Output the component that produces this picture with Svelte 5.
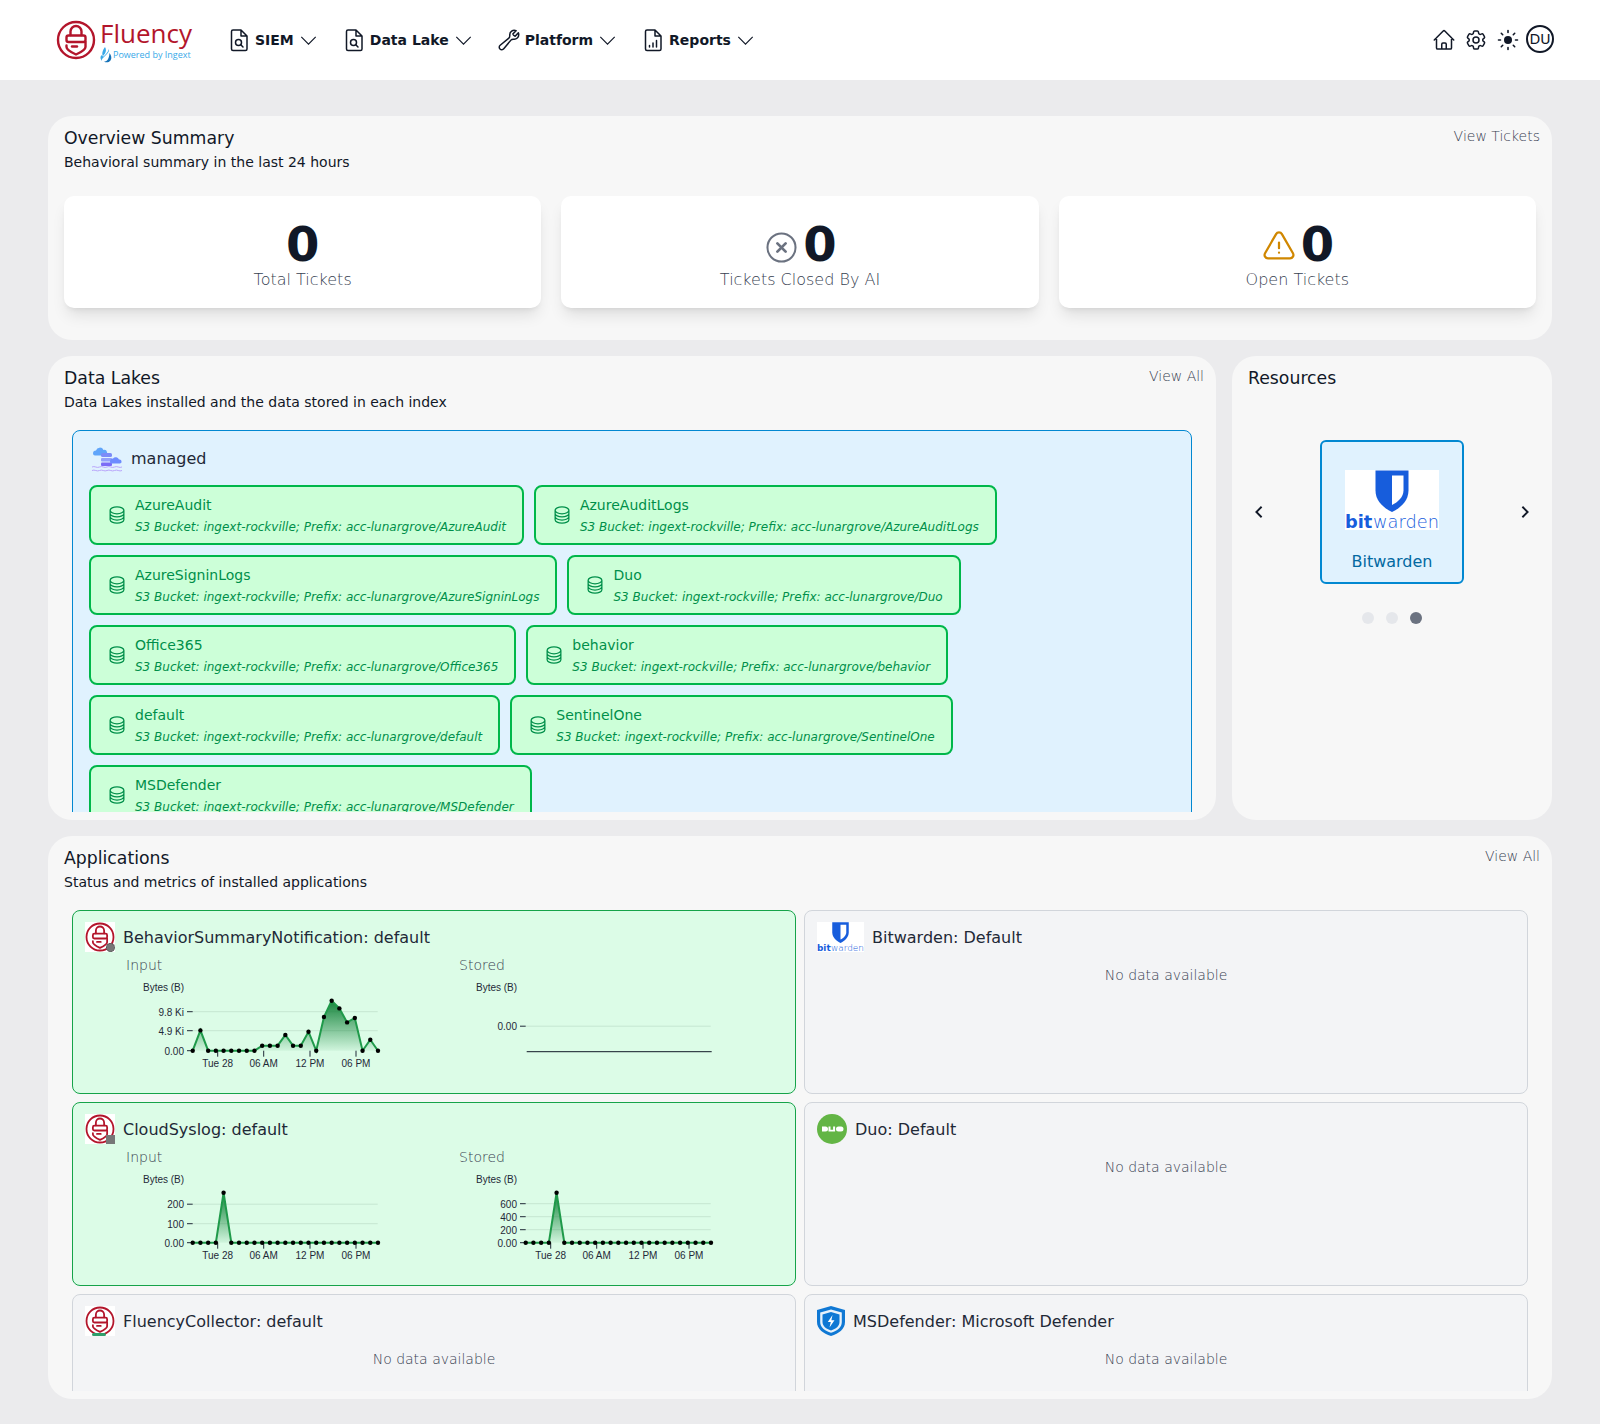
<script>
  const nav = [
    { label: 'SIEM', icon: 'search' },
    { label: 'Data Lake', icon: 'search' },
    { label: 'Platform', icon: 'wrench' },
    { label: 'Reports', icon: 'bars' }
  ];

  const lakes = ['AzureAudit', 'AzureAuditLogs', 'AzureSigninLogs', 'Duo', 'Office365', 'behavior', 'default', 'SentinelOne', 'MSDefender'];

  const zeros = (peak, v) => Array.from({ length: 25 }, (_, i) => (i === peak ? v : 0));

  // heights are pixels above the chart baseline
  const behaviorInput = [0, 20.3, 0, 0, 0, 0, 0, 0, 0, 5, 5, 5, 15.7, 5, 5, 19, 0, 33.7, 50, 42.3, 28.3, 32.7, 0, 11, 0];

  const apps = [
    {
      name: 'BehaviorSummaryNotification: default', logo: 'fluency-gear',
      input: { ticks: [['9.8 Ki', 39], ['4.9 Ki', 20], ['0.00', 0]], pts: behaviorInput },
      stored: { ticks: [['0.00', 24.5]], pts: null }
    },
    { name: 'Bitwarden: Default', logo: 'bitwarden' },
    {
      name: 'CloudSyslog: default', logo: 'fluency-box',
      input: { ticks: [['200', 38.5], ['100', 19], ['0.00', 0]], pts: zeros(4, 50) },
      stored: { ticks: [['600', 39], ['400', 26], ['200', 13], ['0.00', 0]], pts: zeros(4, 50) }
    },
    { name: 'Duo: Default', logo: 'duo' },
    { name: 'FluencyCollector: default', logo: 'fluency-collector' },
    { name: 'MSDefender: Microsoft Defender', logo: 'defender' }
  ];

  const xTicks = [['Tue 28', 91.7], ['06 AM', 137.7], ['12 PM', 184], ['06 PM', 230]];
  const X0 = 66.7;
  const Y0 = 72.7;
  const STEP = 7.72;

  const px = (i) => X0 + i * STEP;
  const line = (pts) => pts.map((v, i) => `${px(i)},${Y0 - v}`).join(' ');
  const area = (pts) => `${X0},${Y0} ${line(pts)} ${px(24)},${Y0}`;
</script>

{#snippet fluencyMark()}
  <g fill="none" stroke="#b3152b" stroke-width="2.400" stroke-linejoin="round" stroke-linecap="round">
    <circle cx="20" cy="20" r="18" />
    <path d="M14.500 15v-3.500a5.500 5.500 0 0 1 11 0V15" />
    <rect x="10.500" y="15.500" width="19" height="6.500" rx="2" />
    <path d="M29.500 22v5c0 2.500-4 5-9.500 7.500-5.500-2.500-9.500-5-9.500-7.500v-1.500" />
    <path d="M16 26.500h5" />
  </g>
{/snippet}

{#snippet bitwarden()}
  <svg class="bw" viewBox="0 0 94 60">
    <rect width="94" height="60" fill="#fff" />
    <path d="M30.500 0.500h33v20c0 11-9 18-16.500 21.500-7.500-3.500-16.500-10.500-16.500-21.500z" fill="#175ddc" />
    <path d="M47 5.500h11.500v15c0 6.500-5.500 11.500-11.500 14.500z" fill="#fff" />
    <text x="0" y="58" class="bw-bit">bit</text>
    <text x="28" y="58" class="bw-warden">warden</text>
  </svg>
{/snippet}

{#snippet appLogo(kind)}
  {#if kind === 'bitwarden'}
    <span class="logo-wide">{@render bitwarden()}</span>
  {:else if kind === 'duo'}
    <svg class="logo" viewBox="0 0 30 30">
      <circle cx="15" cy="15" r="15" fill="#63b545" />
      <path d="M5 12.500h3.500a2.500 2.500 0 0 1 0 5H5zM11.500 12.500h2v3.200h2.600v-3.200h2v5h-6.600zM21.500 12.500h2.500a2.500 2.500 0 0 1 0 5h-2.500a2.500 2.500 0 0 1 0-5z" fill="#fff" />
    </svg>
  {:else if kind === 'defender'}
    <svg class="logo-shield" viewBox="0 0 28 30">
      <path d="M14 0l14 4v12c0 7-6 11.500-14 14C6 27.500 0 23 0 16V4z" fill="#0f78d4" />
      <path d="M14 3.500l10.800 3v9.500c0 5.300-4.600 8.800-10.800 10.800C7.800 24.800 3.200 21.300 3.200 16V6.500z" fill="#e8f2fb" />
      <path d="M14 6l8.500 2.400V16c0 4-3.600 7-8.500 8.500C9.100 23 5.500 20 5.500 16V8.400z" fill="#0f78d4" />
      <path d="M15.500 9l-4.700 7h3l-1.300 5.500 5-7.200h-3.100z" fill="#fff" />
    </svg>
  {:else}
    <span class="logo-box">
      <svg class="logo" viewBox="0 0 40 40">{@render fluencyMark()}</svg>
      {#if kind === 'fluency-gear'}
        <span class="badge gear"></span>
      {:else if kind === 'fluency-box'}
        <span class="badge box"></span>
      {:else if kind === 'fluency-collector'}
        <span class="badge-note"></span>
      {/if}
    </span>
  {/if}
{/snippet}

{#snippet chart(c)}
  <svg class="chart" width="300" height="100" viewBox="0 0 300 100">
    <text x="17" y="13" class="axis">Bytes (B)</text>
    {#each c.ticks as [label, h]}
      {#if h > 0}
        <line x1={X0} x2={X0 + 185} y1={Y0 - h} y2={Y0 - h} class="grid" />
      {/if}
      <text x="58" y={Y0 - h + 4} text-anchor="end" class="axis">{label}</text>
      <line x1="61" x2={X0} y1={Y0 - h} y2={Y0 - h} stroke="#1f2937" />
    {/each}
    {#if c.pts}
      <defs>
        <linearGradient id="fade" x1="0" y1="0" x2="0" y2="1">
          <stop offset="0" stop-color="#16843c" />
          <stop offset="1" stop-color="#16843c" stop-opacity="0.06" />
        </linearGradient>
      </defs>
      <polygon points={area(c.pts)} fill="url(#fade)" />
      {#each xTicks as [label, x]}
        <line x1={x} x2={x} y1={Y0} y2={Y0 + 6} stroke="#1f2937" />
        <text x={x} y={Y0 + 16} text-anchor="middle" class="axis">{label}</text>
      {/each}
      <polyline points={line(c.pts)} fill="none" stroke="#1f9a4a" stroke-width="2" />
      {#each c.pts as v, i}
        <circle cx={px(i)} cy={Y0 - v} r="2.200" fill="#000" />
      {/each}
    {:else}
      <line x1={X0 + 1} x2={X0 + 186} y1={Y0 + 1} y2={Y0 + 1} stroke="#111827" />
    {/if}
  </svg>
{/snippet}

{#snippet chevron()}
  <svg class="chev" viewBox="0 0 24 24" fill="none" stroke="#111827" stroke-width="1.200"><path d="m19.500 8.250-7.500 7.500-7.500-7.500" /></svg>
{/snippet}

<header>
  <div class="brand">
    <svg class="brand-mark" viewBox="0 0 40 40">{@render fluencyMark()}</svg>
    <div class="brand-text">
      <span class="brand-name">Fluency</span>
      <span class="brand-sub">
        <svg viewBox="0 0 12 16" width="12" height="16">
          <path d="M5 0c1.500 2.500 1 4.500 0 6.500L3 9C1.500 7 2.500 3 5 0z" fill="#38a9e8" />
          <path d="M9 2c.5 2-1 4-2.500 5.500L3 11c-1 1-1.500 2-1 3-2-2-2-5 0-6 .5 1 1 1.500 1.500 1.500 2-2 4.500-4 5.500-7.500z" fill="#38a9e8" />
          <path d="M9.500 6c2 2.500 2.500 5.500 1 7.500-1.500 2-4.500 2.500-6.500 1 2.500 0 5-1.500 5.500-8.500z" fill="#1673b8" />
        </svg>
        Powered by Ingext
      </span>
    </div>
  </div>
  <nav>
    {#each nav as item}
      <div class="nav-item">
        <svg class="nav-icon" viewBox="0 0 24 24" fill="none" stroke="#111827" stroke-width="1.500" stroke-linejoin="round" stroke-linecap="round">
          {#if item.icon === 'wrench'}
            <path d="M21.750 6.750a4.500 4.500 0 0 1-4.884 4.484c-1.076-.091-2.264.071-2.950.904l-7.152 8.684a2.548 2.548 0 1 1-3.586-3.586l8.684-7.152c.833-.686.995-1.874.904-2.950a4.500 4.500 0 0 1 6.336-4.486l-3.276 3.276a3.004 3.004 0 0 0 2.250 2.250l3.276-3.276c.256.565.398 1.192.398 1.852Z" />
          {:else}
            <path d="M6 2h8l6 6v13a1.500 1.500 0 0 1-1.500 1.500h-12.500A1.500 1.500 0 0 1 4.500 21V3.500A1.500 1.500 0 0 1 6 2zM14 2v6h6" />
            {#if item.icon === 'search'}
              <circle cx="11.500" cy="14.500" r="3" />
              <path d="M13.800 16.800l2.200 2.200" />
            {:else}
              <path d="M8.500 19v-1.500M12 19v-4M15.500 19v-6.500" />
            {/if}
          {/if}
        </svg>
        <span>{item.label}</span>
        {@render chevron()}
      </div>
    {/each}
  </nav>
  <div class="tools">
    <svg class="tool" viewBox="0 0 24 24" fill="none" stroke="#111827" stroke-width="1.500" stroke-linecap="round" stroke-linejoin="round"><path d="m2.250 12 8.954-8.955c.44-.439 1.152-.439 1.591 0L21.750 12M4.500 9.750v10.125c0 .621.504 1.125 1.125 1.125H9.750v-4.875c0-.621.504-1.125 1.125-1.125h2.250c.621 0 1.125.504 1.125 1.125V21h4.125c.621 0 1.125-.504 1.125-1.125V9.750M8.250 21h8.250" /></svg>
    <svg class="tool" viewBox="0 0 24 24" fill="none" stroke="#111827" stroke-width="1.500" stroke-linecap="round" stroke-linejoin="round"><path d="M9.594 3.940c.09-.542.56-.94 1.110-.94h2.593c.55 0 1.020.398 1.110.94l.213 1.281c.063.374.313.686.645.870.074.04.147.083.22.127.325.196.72.257 1.075.124l1.217-.456a1.125 1.125 0 0 1 1.370.49l1.296 2.247a1.125 1.125 0 0 1-.26 1.431l-1.003.827c-.293.241-.438.613-.43.992a7.723 7.723 0 0 1 0 .255c-.008.378.137.75.43.991l1.004.827c.424.35.534.955.26 1.430l-1.298 2.247a1.125 1.125 0 0 1-1.369.491l-1.217-.456c-.355-.133-.75-.072-1.076.124a6.470 6.470 0 0 1-.22.128c-.331.183-.581.495-.644.869l-.213 1.281c-.09.543-.56.94-1.110.94h-2.594c-.55 0-1.019-.398-1.110-.94l-.213-1.281c-.062-.374-.312-.686-.644-.87a6.520 6.520 0 0 1-.22-.127c-.325-.196-.72-.257-1.076-.124l-1.217.456a1.125 1.125 0 0 1-1.369-.49l-1.297-2.247a1.125 1.125 0 0 1 .26-1.431l1.004-.827c.292-.24.437-.613.43-.991a6.932 6.932 0 0 1 0-.255c.007-.38-.138-.751-.43-.992l-1.004-.827a1.125 1.125 0 0 1-.26-1.430l1.297-2.247a1.125 1.125 0 0 1 1.370-.491l1.216.456c.356.133.751.072 1.076-.124.072-.044.146-.086.22-.128.332-.183.582-.495.644-.869l.214-1.280Z" /><circle cx="12" cy="12" r="3" /></svg>
    <svg class="tool" viewBox="0 0 24 24" fill="none" stroke="#111827" stroke-width="1.600" stroke-linecap="round"><circle cx="12" cy="12" r="4" fill="#111827" stroke="none" /><path d="M12 2.500v2M12 19.500v2M2.500 12h2M19.500 12h2M5.300 5.300l1.400 1.400M17.300 17.300l1.400 1.400M5.300 18.700l1.400-1.400M17.300 6.700l1.400-1.400" /></svg>
    <span class="avatar">DU</span>
  </div>
</header>

<main>
  <section class="panel">
    <div class="panel-head">
      <div>
        <h2>Overview Summary</h2>
        <p>Behavioral summary in the last 24 hours</p>
      </div>
      <span class="link">View Tickets</span>
    </div>
    <div class="stats">
      <div class="stat">
        <div class="stat-num">0</div>
        <div class="stat-label">Total Tickets</div>
      </div>
      <div class="stat">
        <div class="stat-num">
          <svg class="stat-icon closed" viewBox="0 0 24 24" fill="none" stroke="#6b7280" stroke-width="1.500" stroke-linecap="round"><circle cx="12" cy="12" r="10.200" /><path d="M9 9l6 6M15 9l-6 6" stroke-width="2" /></svg>
          0
        </div>
        <div class="stat-label">Tickets Closed By AI</div>
      </div>
      <div class="stat">
        <div class="stat-num">
          <svg class="stat-icon" viewBox="0 0 24 24" fill="none" stroke="#d08700" stroke-width="1.500" stroke-linecap="round" stroke-linejoin="round"><path d="M12 9v3.750m-9.303 3.376c-.866 1.500.217 3.374 1.948 3.374h14.710c1.730 0 2.813-1.874 1.948-3.374L13.949 3.378c-.866-1.500-3.032-1.500-3.898 0L2.697 16.126ZM12 15.750h.007v.008H12v-.008Z" /></svg>
          0
        </div>
        <div class="stat-label">Open Tickets</div>
      </div>
    </div>
  </section>

  <div class="middle">
    <section class="panel lakes-panel">
      <div class="panel-head">
        <div>
          <h2>Data Lakes</h2>
          <p>Data Lakes installed and the data stored in each index</p>
        </div>
        <span class="link">View All</span>
      </div>
      <div class="lake-clip">
        <div class="lake">
          <div class="lake-title">
            <svg class="lake-icon" viewBox="0 0 30 26">
              <path d="M1 7.500a3 3 0 0 1 3-3 4 4 0 0 1 7.500-.5 2.800 2.800 0 0 1 1.500 5.500H3a2 2 0 0 1-2-2z" fill="#60a5fa" />
              <rect x="9" y="7" width="11" height="4" rx="1.500" fill="#7c8cf8" />
              <rect x="9" y="12" width="11" height="3.500" rx="1" fill="#93a0fb" />
              <rect x="9" y="16.500" width="11" height="3.500" rx="1" fill="#7c6cf6" />
              <path d="M18 15.500a3 3 0 0 1 3-3 3.500 3.500 0 0 1 6 1 2 2 0 0 1 1 4h-9a2 2 0 0 1-1-2z" fill="#6d8cff" />
              <path d="M0 21c2.500-1.500 5 1.500 7.500 0s5 1.500 7.500 0 5 1.500 7.500 0 5 1.500 7.500 0M0 24.500c2.500-1.500 5 1.500 7.500 0s5 1.500 7.500 0 5 1.500 7.500 0 5 1.500 7.500 0" fill="none" stroke="#b9a5fb" stroke-width="1" />
            </svg>
            <span>managed</span>
          </div>
          <div class="chips">
            {#each lakes as lake}
              <div class="chip">
                <svg class="db" viewBox="0 0 24 24" fill="none" stroke="currentColor" stroke-width="1.500"><path d="M20.250 6.375c0 2.278-3.694 4.125-8.250 4.125S3.750 8.653 3.750 6.375m16.500 0c0-2.278-3.694-4.125-8.250-4.125S3.750 4.097 3.750 6.375m16.500 0v11.250c0 2.278-3.694 4.125-8.250 4.125s-8.250-1.847-8.250-4.125V6.375m16.500 0v3.750m-16.500-3.750v3.750m16.500 0v3.750C20.250 16.153 16.556 18 12 18s-8.250-1.847-8.250-4.125v-3.750m16.500 0c0 2.278-3.694 4.125-8.250 4.125s-8.250-1.847-8.250-4.125" /></svg>
                <div class="chip-text">
                  <div class="chip-name">{lake}</div>
                  <div class="chip-path">S3 Bucket: ingext-rockville; Prefix: acc-lunargrove/{lake}</div>
                </div>
              </div>
            {/each}
          </div>
        </div>
      </div>
    </section>

    <section class="panel resources">
      <h2>Resources</h2>
      <div class="carousel">
        <svg class="arrow" viewBox="0 0 24 24" fill="none" stroke="#111827" stroke-width="2.500"><path d="M15.500 5l-7 7 7 7" /></svg>
        <div class="res-card">
          <span class="res-logo">{@render bitwarden()}</span>
          <span>Bitwarden</span>
        </div>
        <svg class="arrow" viewBox="0 0 24 24" fill="none" stroke="#111827" stroke-width="2.500"><path d="M8.500 5l7 7-7 7" /></svg>
      </div>
      <div class="dots">
        <span class="dot"></span>
        <span class="dot"></span>
        <span class="dot on"></span>
      </div>
    </section>
  </div>

  <section class="panel apps-panel">
    <div class="panel-head">
      <div>
        <h2>Applications</h2>
        <p>Status and metrics of installed applications</p>
      </div>
      <span class="link">View All</span>
    </div>
    <div class="apps-clip">
      <div class="apps">
        {#each apps as app}
          <div class="app" class:active={app.input}>
            <div class="app-title">
              {@render appLogo(app.logo)}
              <span>{app.name}</span>
            </div>
            {#if app.input}
              <div class="charts">
                <div>
                  <div class="chart-label">Input</div>
                  {@render chart(app.input)}
                </div>
                <div>
                  <div class="chart-label">Stored</div>
                  {@render chart(app.stored)}
                </div>
              </div>
            {:else}
              <div class="empty">No data available</div>
            {/if}
          </div>
        {/each}
      </div>
    </div>
  </section>
</main>

<style>
  :global(body) {
    margin: 0;
    background: #ebebed;
    font-family: "DejaVu Sans", sans-serif;
    color: #111827;
  }
  header {
    height: 80px;
    background: #fff;
    display: flex;
    align-items: center;
    padding: 0 46px 0 56px;
    box-sizing: border-box;
  }
  .brand {
    display: flex;
    align-items: center;
    gap: 4px;
    width: 171px;
  }
  .brand-mark {
    width: 40px;
    height: 40px;
    flex: none;
  }
  .brand-text {
    display: flex;
    flex-direction: column;
    margin-top: 1px;
  }
  .brand-name {
    font-family: "Open Sans", sans-serif;
    font-weight: 400;
    font-size: 26px;
    line-height: 27px;
    color: #b3152b;
    margin-top: 2px;
  }
  .brand-sub {
    display: flex;
    align-items: center;
    gap: 1px;
    font-family: "Open Sans", sans-serif;
    font-size: 9px;
    line-height: 12px;
    color: #38a9e8;
    white-space: nowrap;
  }
  nav {
    display: flex;
    gap: 22px;
  }
  .nav-item {
    display: flex;
    align-items: center;
    gap: 4px;
    font-size: 14px;
    font-weight: 700;
    color: #111827;
  }
  .nav-icon {
    width: 24px;
    height: 24px;
  }
  .chev {
    width: 23px;
    height: 23px;
    margin-left: -1px;
  }
  .tools {
    margin-left: auto;
    display: flex;
    align-items: center;
    gap: 8px;
  }
  .tool {
    width: 24px;
    height: 24px;
  }
  .avatar {
    width: 28px;
    height: 28px;
    box-sizing: border-box;
    border: 2px solid #111827;
    border-radius: 50%;
    display: flex;
    align-items: center;
    justify-content: center;
    font-size: 14px;
    margin: -3px 0 0 -2px;
  }
  main {
    padding: 36px 48px 24px;
    display: flex;
    flex-direction: column;
    gap: 16px;
  }
  .panel {
    background: #f7f7f7;
    border-radius: 24px;
    padding: 8px 12px 32px 16px;
    box-sizing: border-box;
  }
  h2 {
    font-size: 17.3px;
    font-weight: 400;
    line-height: 28px;
    margin: 0;
  }
  .panel p {
    font-size: 14px;
    line-height: 20px;
    margin: 0;
    color: #111827;
  }
  .panel-head {
    display: flex;
    justify-content: space-between;
    align-items: flex-start;
  }
  .link {
    font-size: 14px;
    font-weight: 300;
    line-height: 20px;
    color: #374151;
    margin-top: 2px;
  }
  .stats {
    display: grid;
    grid-template-columns: repeat(3, 1fr);
    gap: 20px;
    margin: 24px 4px 0 0;
  }
  .stat {
    height: 112px;
    box-sizing: border-box;
    padding-top: 24px;
    background: #fff;
    border-radius: 10px;
    box-shadow: 0 10px 15px -3px rgba(0, 0, 0, 0.1), 0 4px 6px -4px rgba(0, 0, 0, 0.1);
    text-align: center;
  }
  .stat-num {
    display: flex;
    justify-content: center;
    align-items: center;
    gap: 8px;
    font-size: 48px;
    font-weight: 700;
    line-height: 48px;
  }
  .stat-icon {
    width: 36px;
    height: 36px;
    margin: 6px -4px 0 0;
  }
  .stat-icon.closed {
    width: 33px;
    height: 33px;
    margin: 6px -3px 0 2px;
  }
  .stat-label {
    font-size: 16px;
    font-weight: 300;
    line-height: 24px;
    color: #374151;
  }
  .middle {
    display: flex;
    gap: 16px;
    height: 464px;
  }
  .lakes-panel {
    flex: 1;
    min-width: 0;
    padding: 8px 12px 8px 16px;
    display: flex;
    flex-direction: column;
  }
  .lake-clip {
    flex: 1;
    min-height: 0;
    overflow: hidden;
    margin: 18px 12px 0 8px;
  }
  .lake {
    border: 1px solid #0288d1;
    border-radius: 8px;
    background: #e0f2fe;
    padding: 13px 16px 16px;
  }
  .lake-title {
    display: flex;
    align-items: center;
    gap: 9px;
    font-size: 16px;
    line-height: 30px;
    padding-left: 3px;
    margin-bottom: 11px;
    color: #1f2937;
  }
  .lake-icon {
    width: 30px;
    height: 26px;
  }
  .chips {
    display: flex;
    flex-wrap: wrap;
    gap: 10px;
  }
  .chip {
    display: flex;
    align-items: center;
    gap: 8px;
    height: 60px;
    box-sizing: border-box;
    padding: 0 16px;
    border: 2px solid #00b74a;
    border-radius: 8px;
    background: #ccffd8;
    color: #008f4a;
  }
  .db {
    width: 20px;
    height: 20px;
    flex: none;
  }
  .chip-text {
    padding-top: 2px;
  }
  .chip-name {
    font-size: 14px;
    line-height: 20px;
  }
  .chip-path {
    font-size: 12px;
    font-style: italic;
    line-height: 20px;
    margin-top: 2px;
    white-space: nowrap;
  }
  .resources {
    width: 320px;
    flex: none;
    padding: 8px 16px;
  }
  .carousel {
    display: flex;
    align-items: center;
    justify-content: space-between;
    margin-top: 48px;
    padding: 0 2px;
  }
  .arrow {
    width: 18px;
    height: 18px;
  }
  .res-card {
    width: 144px;
    height: 144px;
    box-sizing: border-box;
    border: 2px solid #0288d1;
    border-radius: 6px;
    background: #e0f2fe;
    color: #0369a1;
    display: flex;
    flex-direction: column;
    align-items: center;
    padding-top: 28px;
    gap: 22px;
    font-size: 16px;
  }
  .res-logo {
    display: block;
    width: 94px;
    height: 60px;
  }
  .bw {
    display: block;
    width: 100%;
    height: 100%;
  }
  .bw-bit {
    font-size: 17.8px;
    font-weight: 700;
    fill: #175ddc;
  }
  .bw-warden {
    font-size: 17.8px;
    font-weight: 300;
    fill: #175ddc;
  }
  .dots {
    display: flex;
    justify-content: center;
    gap: 12px;
    margin-top: 28px;
  }
  .dot {
    width: 12px;
    height: 12px;
    border-radius: 50%;
    background: #e5e7eb;
  }
  .dot.on {
    background: #6b7280;
  }
  .apps-panel {
    height: 563px;
    padding: 8px 12px 8px 16px;
    display: flex;
    flex-direction: column;
  }
  .apps-clip {
    flex: 1;
    min-height: 0;
    overflow: hidden;
    margin: 18px 12px 0 8px;
  }
  .apps {
    display: grid;
    grid-template-columns: 1fr 1fr;
    gap: 8px;
  }
  .app {
    height: 184px;
    box-sizing: border-box;
    border: 1px solid #d1d5db;
    border-radius: 8px;
    background: #f3f4f6;
    padding: 11px 12px 12px;
  }
  .app.active {
    border-color: #16a34a;
    background: #dcfce7;
  }
  .app-title {
    display: flex;
    align-items: center;
    gap: 8px;
    height: 30px;
    font-size: 16px;
    color: #1f2937;
  }
  .logo {
    width: 30px;
    height: 30px;
    display: block;
    flex: none;
  }
  .logo-wide {
    display: block;
    width: 47px;
    height: 30px;
    flex: none;
  }
  .logo-shield {
    width: 28px;
    height: 30px;
    flex: none;
  }
  .logo-box {
    position: relative;
    display: block;
    width: 30px;
    height: 30px;
    background: #fff;
    flex: none;
  }
  .badge {
    position: absolute;
    right: 0;
    bottom: 0;
    width: 9px;
    height: 9px;
    background: #777;
  }
  .badge.gear {
    border-radius: 50%;
    border: 1px dotted #444;
    box-sizing: border-box;
  }
  .badge-note {
    position: absolute;
    left: 7px;
    bottom: 0;
    width: 14px;
    height: 3px;
    background: #2f9e6b;
    border-radius: 2px;
  }
  .charts {
    display: grid;
    grid-template-columns: 333px 300px;
    padding-left: 41px;
    margin-top: 3px;
  }
  .chart-label {
    font-size: 14px;
    font-weight: 300;
    line-height: 20px;
    color: #374151;
  }
  .chart {
    display: block;
    margin-top: 3px;
  }
  .axis {
    font-family: "Liberation Sans", sans-serif;
    font-size: 10px;
    fill: #1f2937;
  }
  .grid {
    stroke: #c5e6d1;
    stroke-width: 1;
  }
  .empty {
    text-align: center;
    font-size: 14px;
    font-weight: 300;
    line-height: 20px;
    color: #374151;
    margin-top: 13px;
  }
</style>
